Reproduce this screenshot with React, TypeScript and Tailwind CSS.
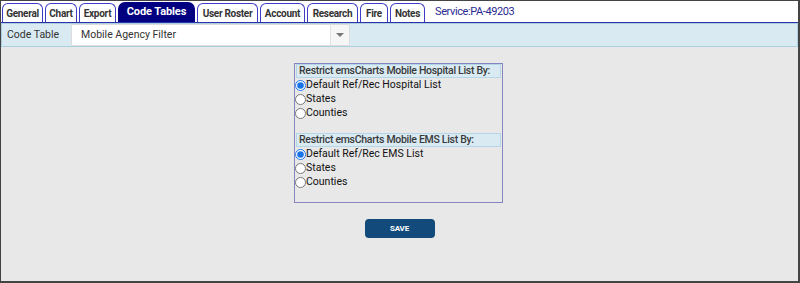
import { useState } from "react";

const tabs = [
  { name: "General", w: "w-[41px]" },
  { name: "Chart", w: "w-[32px]" },
  { name: "Export", w: "w-[37px]" },
  { name: "Code Tables", w: "w-[77px]", active: true },
  { name: "User Roster", w: "w-[61px]" },
  { name: "Account", w: "w-[45px]" },
  { name: "Research", w: "w-[51px]" },
  { name: "Fire", w: "w-[28px]" },
  { name: "Notes", w: "w-[35px]" },
];

function RadioGroup({
  title,
  name,
  first,
}: {
  title: string;
  name: string;
  first: string;
}) {
  const [value, setValue] = useState("default");
  const options = [
    { id: "default", label: first },
    { id: "states", label: "States" },
    { id: "counties", label: "Counties" },
  ];
  return (
    <div className="pb-[13px]">
      <div className="mx-[1px] h-[14px] bg-[#d9eaf2] border border-[#b5d6e6] pl-[2px] text-[10.5px] leading-[12px] font-medium tracking-[-0.3px] whitespace-nowrap text-[#3a3a3a]">
        {title}
      </div>
      {options.map((o) => (
        <label
          key={o.id}
          className="flex items-center h-[14px] text-[10.5px] text-[#111] cursor-pointer"
        >
          <input
            type="radio"
            name={name}
            checked={value === o.id}
            onChange={() => setValue(o.id)}
            className="m-0 w-[11px] h-[11px] accent-[#1a73e8]"
          />
          <span className="leading-[14px]">{o.label}</span>
        </label>
      ))}
    </div>
  );
}

export default function App() {
  return (
    <div
      className="w-[800px] h-[283px] flex flex-col bg-[#e8e8e8] border-t border-l border-r-2 border-b-2 border-[#444]"
      style={{ fontFamily: "Roboto, 'Liberation Sans', sans-serif" }}
    >
      {/* tabs */}
      <div className="flex items-end h-[21px] bg-white pl-[1px] gap-[2px]">
        {tabs.map((t) =>
          t.active ? (
            <div
              key={t.name}
              className={`${t.w} h-[20px] flex items-center justify-center rounded-t-[7px] bg-[#000080] text-white text-[11px] font-bold tracking-[-0.1px]`}
            >
              {t.name}
            </div>
          ) : (
            <div
              key={t.name}
              className={`${t.w} h-[19px] flex items-center justify-center rounded-t-[6px] border border-b-0 border-[#3c3cc4] bg-white text-[#333] text-[10px] font-bold tracking-[-0.3px] whitespace-nowrap`}
            >
              {t.name}
            </div>
          )
        )}
        <div className="self-center pt-[2px] pl-[8px] text-[11px] text-[#2a2a90] tracking-[-0.4px]">
          Service:PA-49203
        </div>
      </div>
      <div className="h-[1px] bg-[#3030a8]" />

      {/* code table bar */}
      <div className="h-[24px] flex items-center bg-[#d9eaf2] border border-[#a9cfe0]">
        <div className="w-[69px] pl-[5px] text-[10.5px] text-[#333]">Code Table</div>
        <div className="w-[279px] h-[22px] flex bg-white border border-[#dcdcdc] rounded-[2px]">
          <div className="flex-1 pl-[9px] text-[10.5px] leading-[20px] text-[#333]">
            Mobile Agency Filter
          </div>
          <div className="w-[19px] flex items-center justify-center bg-[#f6f6f6] border-l border-[#e2e2e2]">
            <div className="w-0 h-0 border-l-[4px] border-r-[4px] border-t-[4px] border-l-transparent border-r-transparent border-t-[#777]" />
          </div>
        </div>
      </div>

      {/* content */}
      <div className="flex-1 flex flex-col items-center pt-[16px]">
        <div className="w-[209px] ml-[-2px] border border-[#8585c2]">
          <RadioGroup
            title="Restrict emsCharts Mobile Hospital List By:"
            name="hospital"
            first="Default Ref/Rec Hospital List"
          />
          <RadioGroup
            title="Restrict emsCharts Mobile EMS List By:"
            name="ems"
            first="Default Ref/Rec EMS List"
          />
        </div>
        <button className="mt-[16px] w-[70px] h-[19px] rounded-[4px] bg-[#134a7c] text-white text-[8px] font-bold tracking-[-0.2px]">
          SAVE
        </button>
      </div>
    </div>
  );
}
